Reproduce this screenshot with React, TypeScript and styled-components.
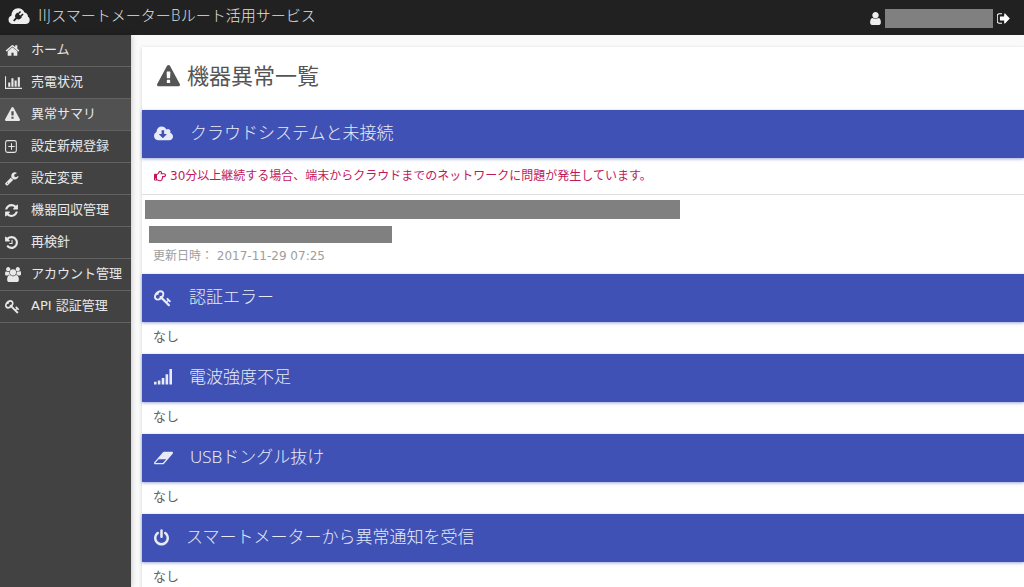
import React from 'react';
import styled, { createGlobalStyle } from 'styled-components';
import { FaRegHandPointRight } from 'react-icons/fa';

const GlobalStyle = createGlobalStyle`
  *, *::before, *::after { box-sizing: border-box; }
  html, body, #root { height: 100%; }
  body {
    margin: 0;
    background: #fafafa;
    color: #616161;
    font-family: 'DejaVu Sans', 'Noto Sans CJK JP', sans-serif;
    font-size: 13px;
    font-weight: 400;
    overflow: hidden;
  }
  h1, h2, p, ul { margin: 0; padding: 0; font-weight: 400; }
`;

const icons = {
  home: {
    x: 0,
    w: 1792,
    d: 'M1472 992v480q0 26-19 45t-45 19h-384v-384h-256v384h-384q-26 0-45-19t-19-45v-480q0-1 .5-3t.5-3l575-474 575 474q1 2 1 6zm223-69l-62 74q-8 9-21 11h-3q-13 0-21-7l-692-577-692 577q-12 8-24 7-13-2-21-11l-62-74q-8-10-7-23.5t11-21.5l719-599q32-26 76-26t76 26l244 204v-195q0-14 9-23t23-9h192q14 0 23 9t9 23v408l219 182q10 8 11 21.5t-7 23.5z',
  },
  chart: {
    x: 0,
    w: 2048,
    d: 'M640 896v512h-256v-512h256zm384-512v1024h-256v-1024h256zm1024 1152v128h-2048v-1536h128v1408h1920zm-640-896v768h-256v-768h256zm384-384v1152h-256v-1152h256z',
  },
  warning: {
    x: 0,
    w: 1792,
    d: 'M1024 1375v-190q0-14-9.500-23.500t-22.500-9.500h-192q-13 0-22.500 9.500t-9.500 23.500v190q0 14 9.500 23.500t22.500 9.500h192q13 0 22.500-9.500t9.500-23.500zm-2-374l18-459q0-12-10-19-13-11-24-11h-220q-11 0-24 11-10 7-10 21l17 457q0 10 10 16.500t24 6.500h185q14 0 23.500-6.500t10.500-16.500zm-14-934l768 1408q35 63-2 126-17 29-46.500 46t-63.500 17h-1536q-34 0-63.500-17t-46.500-46q-37-63-2-126l768-1408q17-31 47-49t65-18 65 18 47 49z',
  },
  plus: {
    x: 0,
    w: 1536,
    d: 'M1152 832v128h-320v320h-128v-320h-320v-128h320v-320h128v320zM288 256h832a160 160 0 0 1 160 160v960a160 160 0 0 1-160 160h-832a160 160 0 0 1-160-160v-960a160 160 0 0 1 160-160zM288 128a288 288 0 0 0-288 288v960a288 288 0 0 0 288 288h832a288 288 0 0 0 288-288v-960a288 288 0 0 0-288-288z',
  },
  wrench: {
    x: 64,
    w: 1728,
    d: 'M448 1472q0-26-19-45t-45-19-45 19-19 45 19 45 45 19 45-19 19-45zm644-420l-682 682q-37 37-90 37-52 0-91-37l-106-108q-38-36-38-90 0-53 38-91l681-681q39 98 114.500 173.500t173.500 114.500zm634-435q0 39-23 106-47 134-164.500 217.500t-258.500 83.500q-185 0-316.500-131.500t-131.500-316.500 131.500-316.500 316.500-131.500q58 0 121.500 16.500t107.500 46.500q16 11 16 28t-16 28l-293 169v224l193 107q5-3 79-48.500t135.500-81 70.500-35.500q15 0 23.500 10t8.500 25z',
  },
  refresh: {
    x: 128,
    w: 1536,
    d: 'M1639 1056q0 5-1 7-64 268-268 434.500t-478 166.500q-146 0-282.500-55t-243.500-157l-129 129q-19 19-45 19t-45-19-19-45v-448q0-26 19-45t45-19h448q26 0 45 19t19 45-19 45l-137 137q71 66 161 102t187 36q134 0 250-65t186-179q11-17 53-117 8-23 30-23h192q13 0 22.500 9.500t9.500 22.500zm25-800v448q0 26-19 45t-45 19h-448q-26 0-45-19t-19-45 19-45l138-138q-148-137-349-137-134 0-250 65t-186 179q-11 17-53 117-8 23-30 23h-199q-13 0-22.500-9.500t-9.500-22.500v-7q65-268 270-434.500t480-166.500q146 0 284 55.500t245 156.500l130-129q19-19 45-19t45 19 19 45z',
  },
  history: {
    x: 128,
    w: 1536,
    d: 'M1664 896q0 156-61 298t-164 245-245 164-298 61q-172 0-327-72.500t-264-204.500q-7-10-6.500-22.500t8.500-20.500l137-138q10-9 25-9 16 2 23 12 73 95 179 147t225 52q104 0 198.500-40.500t163.500-109.500 109.500-163.500 40.500-198.500-40.500-198.500-109.500-163.500-163.500-109.500-198.500-40.500q-98 0-188 35.500t-160 101.500l137 138q31 30 14 69-17 40-59 40h-448q-26 0-45-19t-19-45v-448q0-42 40-59 39-17 69 14l130 129q107-101 244.500-156.500t284.500-55.500q156 0 298 61t245 164 164 245 61 298zm-640-288v448q0 14-9 23t-23 9h-320q-14 0-23-9t-9-23v-64q0-14 9-23t23-9h224v-352q0-14 9-23t23-9h64q14 0 23 9t9 23z',
  },
  users: {
    x: 0,
    w: 1920,
    d: 'M593 896q-162 5-265 128h-134q-82 0-138-40.500t-56-118.500q0-353 124-353 6 0 43.500 21t97.500 42.500 119 21.500q67 0 133-23-5 37-5 66 0 159 93 293zm1071 637q0 120-73 189.500t-194 69.500h-874q-121 0-194-69.500t-73-189.500q0-53 3.500-103.500t14-109 26.500-108.500 43-97.500 62-81 85.500-53.500 111.500-20q10 0 43 21.500t73 48 107 48 135 21.500 135-21.500 107-48 73-48 43-21.500q61 0 111.500 20t85.500 53.500 62 81 43 97.500 26.500 108.500 14 109 3.500 103.500zm-1024-1277q0 106-75 181t-181 75-181-75-75-181 75-181 181-75 181 75 75 181zm704 384q0 159-112.500 271.500t-271.500 112.500-271.500-112.500-112.500-271.500 112.500-271.500 271.500-112.500 271.500 112.500 112.500 271.500zm576 225q0 78-56 118.500t-138 40.500h-134q-103-123-265-128 93-134 93-293 0-29-5-66 66 23 133 23 59 0 119-21.500t97.500-42.500 43.500-21q124 0 124 353zm-128-609q0 106-75 181t-181 75-181-75-75-181 75-181 181-75 181 75 75 181z',
  },
  key: {
    x: 0,
    w: 1792,
    d: 'M832 512q0-80-56-136t-136-56-136 56-56 136q0 42 19 83-41-19-83-19-80 0-136 56t-56 136 56 136 136 56 136-56 56-136q0-42-19-83 41 19 83 19 80 0 136-56t56-136zm851 704q0 17-49 66t-66 49q-9 0-28.500-16t-36.500-33-38.500-40-24.500-26l-96 96 220 220q28 28 28 68 0 42-39 81t-81 39q-40 0-68-28l-671-671q-176 131-365 131-163 0-265.500-102.500t-102.500-265.500q0-160 95-313t248-248 313-95q163 0 265.500 102.500t102.500 265.500q0 189-131 365l355 355 96-96q-3-3-26-24.500t-40-38.500-33-36.500-16-28.500q0-17 49-66t66-49q13 0 23 10 6 6 46 44.500t82 79.500 86.500 86 73 78 28.500 41z',
  },
  cloud: {
    x: 0,
    w: 1920,
    d: 'M1280 928q0-14-9-23t-23-9h-224v-352q0-13-9.500-22.500t-22.500-9.500h-192q-13 0-22.500 9.500t-9.500 22.500v352h-224q-13 0-22.500 9.500t-9.500 22.500q0 14 9 23l352 352q9 9 23 9t23-9l351-351q10-12 10-24zm640 224q0 159-112.500 271.500t-271.500 112.500h-1088q-185 0-316.500-131.500t-131.500-316.500q0-130 70-240t188-165q-2-30-2-43 0-212 150-362t362-150q156 0 285.500 87t188.500 231q71-62 166-62 106 0 181 75t75 181q0 76-41 138 130 31 213.500 135.500t83.500 238.500z',
  },
  signal: {
    x: 0,
    w: 1792,
    d: 'M0 1280h256v256h-256zM384 1152h256v384h-256zM768 896h256v640h-256zM1152 512h256v1024h-256zM1536 0h256v1536h-256z',
  },
  eraser: {
    x: 0,
    w: 1920,
    d: 'M896 1408l336-384h-768l-336 384h768zm1013-1077q15 34 9.500 71.500t-30.500 65.500l-896 1024q-38 44-96 44h-768q-38 0-69.500-20.500t-47.500-54.500q-15-34-9.500-71.500t30.500-65.500l896-1024q38-44 96-44h768q38 0 69.500 20.500t47.500 54.500z',
  },
  power: {
    x: 128,
    w: 1536,
    d: 'M1664 896q0 156-61 298t-164 245-245 164-298 61-298-61-245-164-164-245-61-298q0-182 80.500-343t226.500-270q43-32 95.500-25t83.500 50q32 42 24.500 94.500t-49.500 84.500q-98 74-151.500 181t-53.500 228q0 104 40.500 198.500t109.500 163.500 163.500 109.500 198.500 40.500 198.500-40.500 163.500-109.500 109.500-163.500 40.500-198.500q0-121-53.500-228t-151.500-181q-42-32-49.500-84.500t24.500-94.500q31-43 84-50t95 25q146 109 226.500 270t80.500 343zm-640-768v640q0 52-38 90t-90 38-90-38-38-90v-640q0-52 38-90t90-38 90 38 38 90z',
  },
  user: {
    x: 256,
    w: 1280,
    d: 'M1536 1399q0 109-62.500 187t-150.500 78h-854q-88 0-150.500-78t-62.500-187q0-85 8.500-160.500t31.500-152 58.500-131 94-89 134.500-34.500q131 128 313 128t313-128q76 0 134.500 34.500t94 89 58.500 131 31.500 152 8.500 160.500zm-256-887q0 159-112.500 271.500t-271.500 112.500-271.500-112.500-112.500-271.500 112.500-271.500 271.500-112.500 271.500 112.500 112.500 271.500z',
  },
  signOut: {
    x: 96,
    w: 1568,
    d: 'M704 1440q0 4 1 20t.5 26.500-3 23.500-10 19.500-20.500 6.500h-320q-119 0-203.500-84.500t-84.500-203.500v-704q0-119 84.500-203.500t203.500-84.500h320q13 0 22.500 9.500t9.500 22.500q0 4 1 20t.5 26.500-3 23.500-10 19.500-20.500 6.500h-320q-66 0-113 47t-47 113v704q0 66 47 113t113 47h312l11.500 1 11.500 3 8 5.500 7 9 2 13.500zm928-544q0 26-19 45l-544 544q-19 19-45 19t-45-19-19-45v-288h-448q-26 0-45-19t-19-45v-384q0-26 19-45t45-19h448v-288q0-26 19-45t45-19 45 19l544 544q19 19 19 45z',
  },
};

type IconName = keyof typeof icons;

function Icon({ name, size }: { name: IconName; size: number }) {
  const { x, w, d } = icons[name];
  return (
    <svg height={size} width={Math.round((size * w) / 1792)} viewBox={`${x} 0 ${w} 1792`} fill="currentColor" fillRule="evenodd" aria-hidden="true">
      <path d={d} />
    </svg>
  );
}

function Logo() {
  return (
    <svg width="22" height="18" viewBox="0 0 22 18" aria-hidden="true">
      <path
        fill="#eee"
        d="M5 17C2.200 17 .5 15.100.5 12.700c0-2 1.200-3.600 3-4.200C3.400 4.400 6.200 1.200 10.200 1.200c3 0 5.400 1.700 6.300 4.400 2.200.4 3.500 2 3.500 4.100 1.200.6 1.700 1.800 1.700 3.200 0 2.400-1.800 4.100-4.200 4.100z"
      />
      <g transform="rotate(45 10.500 9)" fill="#222">
        <path d="M7.200 7.500h6.600v1.300c0 2-1 3.200-2.400 3.600v3.400H9.600v-3.400C8.200 12 7.200 10.800 7.200 8.800z" />
        <path d="M8 4.300h1.500v3.500H8zM11.500 4.300H13v3.500h-1.500z" />
      </g>
    </svg>
  );
}

const Page = styled.div`
  display: flex;
  flex-direction: column;
  height: 100vh;
`;

const Header = styled.header`
  display: flex;
  flex: none;
  align-items: center;
  height: 35px;
  padding: 0 14px 3px 8px;
  background: #212121;
  color: #eee;
`;

const Brand = styled.a`
  display: flex;
  align-items: center;
  gap: 8px;
  color: #e0e0e0;
  font-size: 15px;
  font-weight: 300;
  line-height: 20px;
  text-decoration: none;
`;

const Account = styled.div`
  display: flex;
  align-items: center;
  gap: 4px;
  margin-left: auto;
  padding-top: 5px;
`;

const Mask = styled.span<{ $width: number; $height: number }>`
  display: block;
  width: ${(p) => p.$width}px;
  max-width: 100%;
  height: ${(p) => p.$height}px;
  background: #808080;
`;

const LogoutButton = styled.button`
  display: flex;
  padding: 0;
  border: 0;
  background: none;
  color: #fff;
`;

const Body = styled.div`
  display: flex;
  flex: 1;
  min-height: 0;
`;

const Sidebar = styled.nav`
  flex: none;
  width: 131px;
  background: #424242;
  box-shadow: 0 0 6px rgba(0, 0, 0, 0.25);

  ul { list-style: none; }
`;

const NavLink = styled.a<{ $active: boolean }>`
  display: flex;
  align-items: center;
  height: 32px;
  padding: 0 0 1px 5px;
  border-bottom: 1px solid #616161;
  background: ${(p) => (p.$active ? '#515151' : 'transparent')};
  color: #e8e8e8;
  line-height: 20px;
  text-decoration: none;
  white-space: nowrap;
`;

const NavIcon = styled.span`
  display: flex;
  flex: none;
  width: 26px;
`;

const Main = styled.main`
  flex: 1;
  min-width: 0;
  padding: 12px 0 0 11px;
`;

const Card = styled.article`
  min-height: 100%;
  background: #fff;
  box-shadow: 0 1px 4px rgba(0, 0, 0, 0.16);
`;

const PageTitle = styled.h1`
  display: flex;
  align-items: center;
  gap: 7px;
  height: 63px;
  padding: 0 15px 4px;
  color: #555;
  font-size: 22px;
  line-height: 32px;
`;

const SectionTitle = styled.h2`
  display: flex;
  align-items: center;
  gap: 17px;
  height: 48px;
  padding: 0 12px 2px;
  background: #3f51b5;
  box-shadow: 0 1px 3px rgba(63, 81, 181, 0.5);
  color: #e8eaf6;
  font-family: 'Noto Sans', 'Noto Sans CJK JP', sans-serif;
  font-size: 17px;
  font-weight: 300;
  line-height: 24px;

  svg { margin-top: 2px; }
`;

const Empty = styled.p`
  height: 32px;
  padding: 0 11px;
  line-height: 30px;
`;

const Notice = styled.p`
  display: flex;
  align-items: center;
  gap: 4px;
  height: 37px;
  padding: 0 12px 3px;
  border-bottom: 1px solid #e0e0e0;
  color: #c2185b;
  font-size: 12px;

  svg { margin-top: 2px; }
`;

const Device = styled.div`
  display: flex;
  flex-direction: column;
  gap: 7px;
  height: 79px;
  padding: 5px 3px 0;
`;

const DeviceDetail = styled.div`
  padding: 0 4px;
`;

const Updated = styled.p`
  padding: 3px 4px 0;
  color: #9e9e9e;
  font-size: 12px;
  line-height: 20px;
`;

const menu: { icon: IconName; label: string }[] = [
  { icon: 'home', label: 'ホーム' },
  { icon: 'chart', label: '売電状況' },
  { icon: 'warning', label: '異常サマリ' },
  { icon: 'plus', label: '設定新規登録' },
  { icon: 'wrench', label: '設定変更' },
  { icon: 'refresh', label: '機器回収管理' },
  { icon: 'history', label: '再検針' },
  { icon: 'users', label: 'アカウント管理' },
  { icon: 'key', label: 'API 認証管理' },
];

const emptySections: { icon: IconName; title: string }[] = [
  { icon: 'key', title: '認証エラー' },
  { icon: 'signal', title: '電波強度不足' },
  { icon: 'eraser', title: 'USBドングル抜け' },
  { icon: 'power', title: 'スマートメーターから異常通知を受信' },
];

export default function App() {
  return (
    <Page lang="ja">
      <GlobalStyle />
      <Header>
        <Brand href="#">
          <Logo />
          IIJスマートメーターBルート活用サービス
        </Brand>
        <Account>
          <Icon name="user" size={15} />
          <Mask $width={108} $height={19} />
          <LogoutButton type="button" aria-label="ログアウト">
            <Icon name="signOut" size={15} />
          </LogoutButton>
        </Account>
      </Header>
      <Body>
        <Sidebar>
          <ul>
            {menu.map((item) => (
              <li key={item.label}>
                <NavLink href="#" $active={item.icon === 'warning'}>
                  <NavIcon>
                    <Icon name={item.icon} size={15} />
                  </NavIcon>
                  {item.label}
                </NavLink>
              </li>
            ))}
          </ul>
        </Sidebar>
        <Main>
          <Card>
            <PageTitle>
              <Icon name="warning" size={23} />
              機器異常一覧
            </PageTitle>
            <section>
              <SectionTitle>
                <Icon name="cloud" size={18} />
                クラウドシステムと未接続
              </SectionTitle>
              <Notice>
                <FaRegHandPointRight size={12} aria-hidden="true" />
                30分以上継続する場合、端末からクラウドまでのネットワークに問題が発生しています。
              </Notice>
              <Device>
                <Mask $width={535} $height={19} />
                <DeviceDetail>
                  <Mask $width={243} $height={17} />
                  <Updated>更新日時： 2017-11-29 07:25</Updated>
                </DeviceDetail>
              </Device>
            </section>
            {emptySections.map((s) => (
              <section key={s.title}>
                <SectionTitle>
                  <Icon name={s.icon} size={18} />
                  {s.title}
                </SectionTitle>
                <Empty>なし</Empty>
              </section>
            ))}
          </Card>
        </Main>
      </Body>
    </Page>
  );
}
